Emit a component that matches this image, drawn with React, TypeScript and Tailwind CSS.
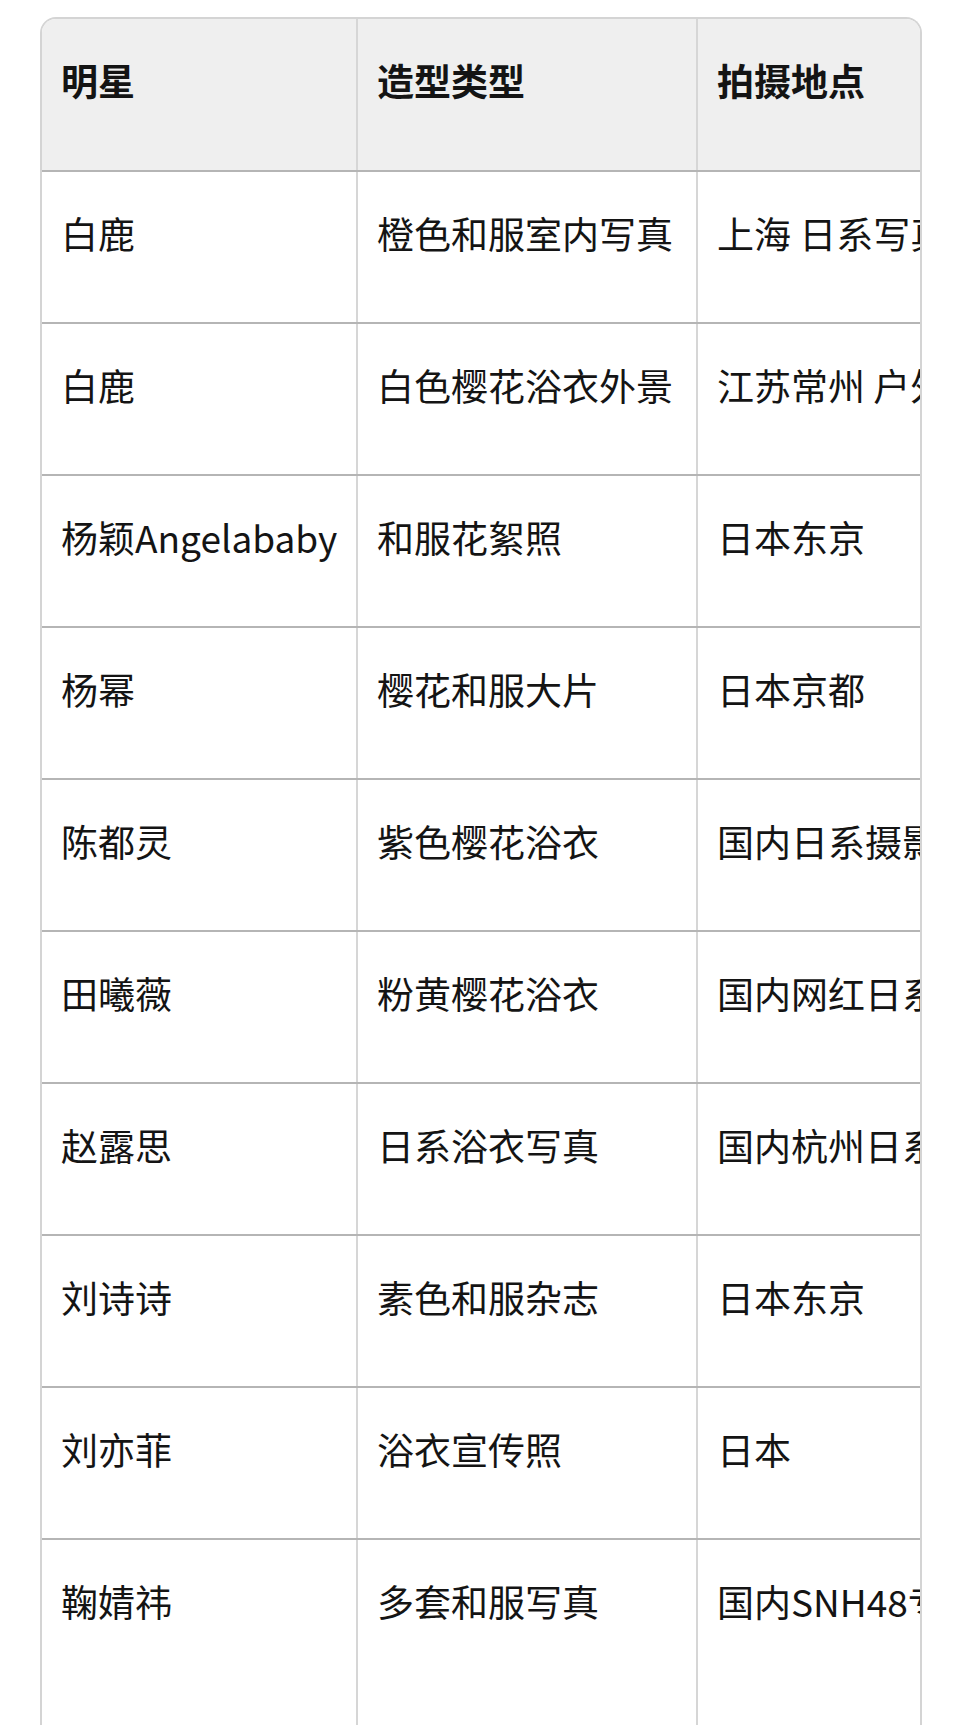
const font = "font-['Noto_Sans_CJK_SC','Noto_Sans',sans-serif]";

const rows: [string, string, string, string][] = [
  ["白鹿", "橙色和服室内写真", "上海 日系写真馆", "室内布景，暖色调"],
  ["白鹿", "白色樱花浴衣外景", "江苏常州 户外樱花园", "春季外景，自然光"],
  ["杨颖Angelababy", "和服花絮照", "日本东京", "杂志拍摄花絮"],
  ["杨幂", "樱花和服大片", "日本京都", "时尚杂志封面"],
  ["陈都灵", "紫色樱花浴衣", "国内日系摄影棚", "清新风格写真"],
  ["田曦薇", "粉黄樱花浴衣", "国内网红日系街区", "街拍风格"],
  ["赵露思", "日系浴衣写真", "国内杭州日系街区", "夏日主题"],
  ["刘诗诗", "素色和服杂志", "日本东京", "杂志内页"],
  ["刘亦菲", "浴衣宣传照", "日本", "品牌宣传"],
  ["鞠婧祎", "多套和服写真", "国内SNH48专属影棚", "多套造型轮换拍摄"],
];

function Row({ cells, head, last }: { cells: string[]; head?: boolean; last?: boolean }) {
  const h = head ? "h-[153px]" : last ? "h-[220px]" : "h-[152px]";
  return (
    <div
      className={`flex ${h} ${last ? "" : "border-b-2 border-[#b5b5b5]"} ${
        head ? "bg-[#efefef] font-bold" : "bg-white"
      }`}
    >
      <div className="w-[316px] shrink-0 border-r-2 border-[#d6d6d6] pl-[19px] pt-[33px]">{cells[0]}</div>
      <div className="w-[340px] shrink-0 border-r-2 border-[#d6d6d6] pl-[19px] pt-[33px]">{cells[1]}</div>
      <div className="w-[380px] shrink-0 border-r-2 border-[#d6d6d6] pl-[19px] pt-[33px] whitespace-nowrap">
        {cells[2]}
      </div>
      <div className="w-[360px] shrink-0 pl-[19px] pt-[33px]">{cells[3]}</div>
    </div>
  );
}

export default function App() {
  return (
    <div className={`min-h-[1725px] bg-white pl-[40px] pt-[17px] ${font}`}>
      <div className="h-[1725px] w-[882px] overflow-hidden rounded-t-[16px] border-2 border-b-0 border-[#d4d4d4]">
        <div className="w-[1396px] text-[37px] leading-[56px] text-[#141414]">
          <Row cells={["明星", "造型类型", "拍摄地点", "备注"]} head />
          {rows.map((r, i) => (
            <Row key={i} cells={r} last={i === rows.length - 1} />
          ))}
        </div>
      </div>
    </div>
  );
}
